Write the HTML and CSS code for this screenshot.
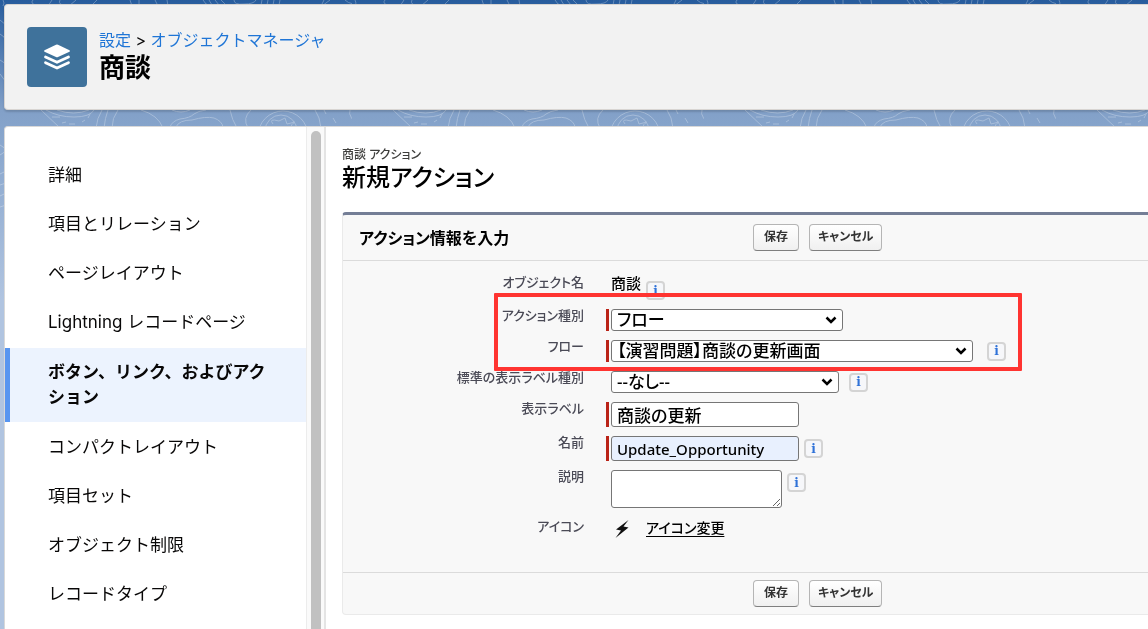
FILE: index.html
```
<!DOCTYPE html>
<html lang="ja">
<head>
<meta charset="utf-8">
<title>商談 | オブジェクトマネージャ</title>
<link rel="stylesheet" href="styles.css">
</head>
<body>
<svg class="backdrop" aria-hidden="true">
  <defs>
    <pattern id="topo" width="352" height="629" patternUnits="userSpaceOnUse">
      <g fill="none" stroke="#fff" stroke-width="1">
        <path d="M3 0q2 3 0 6M33 0q-4 4 6 6M52 0l-4 6M60 0q-3 5 8 6M76 0l-7 6M97 0l-6 6M130 0l2 6M139 0v6M155 0l3 6M167 0l1 6M203 0l3 4 6 2M209 0l3 5M215 0l4 5M221 0l4 4M234 0q0 5 10 4 10 0 12-4M262 0l-1 5M268 0l-1 5M274 0l-1 5M280 0l-1 5M324 0l-3 6M330 0l-8 6M345 0q6 6 18 3"/>
        <path d="M41 110l19 18M52 117h8M62 123l4-1M69 124h6M82 122l3-2M88 118l2-4M46 110q12 7 28 7t20-7M57 110q17 6 32 0M102 110q-5 8-6 18M108 110q-3 8-4 18M118 110q-6 8-6 18M141 110q17 5 22 18M172 110q9 4 18 0M170 127q2-6 10-8 10-1 14-5 4-3 12-4M176 127q3-7 16-7 14-4 22-2 8 3 9 9M230 110q2 10 7 18M251 110q-9 8-3 18M315 110q5 7 6 18M324 110l2 4M333 118l3 5M350 110q-3 7 12 18"/>
        <circle cx="283" cy="136" r="25"/><circle cx="281" cy="131" r="16"/>
        <path d="M273 124q-5-6 6-3l6-3 2 6 8-2q-5 3-3 5M0 20l6 5M0 34q5 2 6 8M0 60l6 4M0 74l6 8M0 145l6 4M0 155l6-4M0 174l6-3M0 185l6-2M0 196l6-3M0 207l6-2"/>
      </g>
    </pattern>
  </defs>
  <rect width="100%" height="100%" fill="url(#topo)"/>
</svg>
<div class="page">
  <header class="page-header">
    <span class="object-icon">
      <svg viewBox="0 0 28 28" aria-hidden="true">
        <path d="M14 1.500Q14.500 1.500 15 1.700L26.500 7.300Q27.500 8 26.500 8.700L15 14.100Q14 14.500 13 14.100L1.500 8.700Q.500 8 1.500 7.300L13 1.700Q13.500 1.500 14 1.500Z" fill="#fff"/>
        <path d="M2.500 14L14 19.300 25.500 14M2.500 19.700L14 25 25.500 19.700" fill="none" stroke="#fff" stroke-width="2.800" stroke-linecap="round" stroke-linejoin="round"/>
      </svg>
    </span>
    <div>
      <nav class="breadcrumb"><a href="#">設定</a> &gt; <a href="#">オブジェクトマネージャ</a></nav>
      <h1 class="object-name">商談</h1>
    </div>
  </header>
  <div class="workspace">
    <nav class="side-nav">
      <a class="side-link" href="#">詳細</a>
      <a class="side-link" href="#">項目とリレーション</a>
      <a class="side-link" href="#">ページレイアウト</a>
      <a class="side-link" href="#">Lightning レコードページ</a>
      <a class="side-link active" href="#" aria-current="page">ボタン、リンク、およびアクション</a>
      <a class="side-link" href="#">コンパクトレイアウト</a>
      <a class="side-link" href="#">項目セット</a>
      <a class="side-link" href="#">オブジェクト制限</a>
      <a class="side-link" href="#">レコードタイプ</a>
    </nav>
    <div class="scroll-track"><div class="scroll-thumb"></div></div>
    <main class="content">
      <p class="kicker">商談 アクション</p>
      <h2 class="title">新規アクション</h2>
      <form class="panel">
        <div class="panel-bar panel-head">
          <h3 class="panel-title">アクション情報を入力</h3>
          <div class="actions">
            <button class="btn" type="button">保存</button>
            <button class="btn" type="button">キャンセル</button>
          </div>
        </div>
        <div class="fields">
          <span class="label">オブジェクト名</span>
          <div class="field first"><span class="value">商談</span><button class="info low" type="button" aria-label="オブジェクト名の情報">i</button></div>

          <label class="label" for="type">アクション種別</label>
          <div class="field required">
            <span class="select-box w-type"><select id="type"><option>フロー</option></select><svg viewBox="0 0 12 8" aria-hidden="true"><path d="M1.500 1.500L6 6L10.500 1.500"/></svg></span>
          </div>

          <label class="label" for="flow">フロー</label>
          <div class="field required">
            <span class="select-box w-flow"><select id="flow"><option>【演習問題】商談の更新画面</option></select><svg viewBox="0 0 12 8" aria-hidden="true"><path d="M1.500 1.500L6 6L10.500 1.500"/></svg></span>
            <button class="info far" type="button" aria-label="フローの情報">i</button>
          </div>

          <label class="label" for="std">標準の表示ラベル種別</label>
          <div class="field">
            <span class="select-box w-std"><select id="std"><option>--なし--</option></select><svg viewBox="0 0 12 8" aria-hidden="true"><path d="M1.500 1.500L6 6L10.500 1.500"/></svg></span>
            <button class="info mid" type="button" aria-label="標準の表示ラベル種別の情報">i</button>
          </div>

          <label class="label" for="lbl">表示ラベル</label>
          <div class="field required"><input class="text" id="lbl" type="text" value="商談の更新"></div>

          <label class="label" for="name">名前</label>
          <div class="field required"><input class="text filled" id="name" type="text" value="Update_Opportunity"><button class="info" type="button" aria-label="名前の情報">i</button></div>

          <label class="label" for="desc">説明</label>
          <div class="field top"><textarea class="area" id="desc"></textarea><button class="info" type="button" aria-label="説明の情報">i</button></div>

          <span class="label icon-label">アイコン</span>
          <div class="field">
            <svg class="bolt" viewBox="0 0 16 20" aria-hidden="true"><path d="M14.500 1L2 10.500 7 11.500 1.500 19 14.500 8.500 9.500 7.500Z"/></svg>
            <a class="change" href="#">アイコン変更</a>
          </div>
          <div class="highlight"></div>
        </div>
        <div class="panel-bar panel-foot">
          <div class="actions">
            <button class="btn" type="button">保存</button>
            <button class="btn" type="button">キャンセル</button>
          </div>
        </div>
      </form>
    </main>
  </div>
</div>
</body>
</html>
```
FILE: styles.css
```
* { box-sizing: border-box; }
body {
  margin: 0;
  overflow: hidden;
  color: #080707;
  font-family: Inter, "Noto Sans CJK JP", sans-serif;
  background: linear-gradient(#275c9d 0, #82a0c8 110px, #86a4cb 128px, #b0c4e0 300px, #b0c4e0 100%);
}
.backdrop { position: fixed; inset: 0; width: 100%; height: 100%; z-index: -1; opacity: .28; }
.page { display: flex; flex-direction: column; gap: 16px; height: 100vh; padding: 4px 0 0 4px; }

.page-header {
  display: flex;
  align-items: flex-start;
  gap: 12px;
  flex: none;
  padding: 22px;
  border: 1px solid #d8d5d2;
  border-right: 0;
  border-radius: 4px 0 0 4px;
  background: #f2f2f2;
  box-shadow: 0 2px 2px rgba(0, 0, 0, .15);
}
.object-icon { display: flex; align-items: center; justify-content: center; width: 60px; height: 60px; border-radius: 4px; background: #3f729b; }
.object-icon svg { width: 28px; height: 28px; }
.breadcrumb { font-size: 16px; line-height: 26px; }
.breadcrumb a { color: #1f75d6; text-decoration: none; }
.object-name { margin: 0; font-size: 26px; line-height: 30px; font-weight: 700; color: #000; }

.workspace {
  display: grid;
  grid-template-columns: 301px 20px 1fr;
  flex: 1;
  min-height: 0;
  overflow: hidden;
  border: 1px solid #d8d8d8;
  border-width: 1px 0 0 1px;
  border-radius: 4px 0 0 0;
  background: #fff;
}
.side-nav { padding-top: 24px; overflow: hidden; }
.side-link { display: block; padding: 12px 28px 12px 43px; font-size: 17px; line-height: 25px; color: #080707; text-decoration: none; }
.side-link.active { margin: 1px 0; padding-left: 38px; border-left: 5px solid #5795f0; background: #ecf3fe; font-weight: 700; }
.scroll-track { padding: 4px 4px 0; border-left: 1px solid #ececec; border-right: 2px solid #e4e4e4; background: #fafafa; }
.scroll-thumb { width: 10px; height: 100%; border-radius: 5px 5px 0 0; background: #c1c1c1; }

.content { padding: 20px 0 0 16px; font-feature-settings: "palt"; font-family: "Noto Sans", "Noto Sans CJK JP", sans-serif; }
.kicker { margin: 0; font-size: 12px; line-height: 16px; font-weight: 500; color: #3e3e3c; }
.title { margin: 0 0 21px; font-size: 24px; line-height: 28px; font-weight: 500; color: #000; }

.panel { border: 1px solid #eaeaea; border-top: 3px solid #747e96; border-right: 0; border-radius: 4px 0 0 4px; background: #f8f8f8; }
.panel-bar { display: grid; grid-template-columns: 394px 1fr; align-items: center; padding-left: 16px; }
.panel-head { height: 46px; border-bottom: 1px solid #dbdbdb; }
.panel-foot { height: 42px; border-top: 1px solid #dbdbdb; }
.panel-title { margin: 0; font-size: 16px; line-height: 24px; color: #000; }
.actions { grid-column: 2; display: flex; gap: 10px; }
.btn {
  min-width: 46px;
  height: 27px;
  padding: 0 8px 2px;
  border: 1px solid #b5b5b5;
  border-bottom-color: #7f7f7f;
  border-radius: 4px;
  background: linear-gradient(#fff, #f0f0f0);
  color: #333;
  font: 700 12px/20px "Noto Sans", "Noto Sans CJK JP", sans-serif;
  font-feature-settings: inherit;
}

.fields { position: relative; display: grid; grid-template-columns: 241px 1fr; column-gap: 22px; row-gap: 9px; padding: 15px 0 33px; }
.label { justify-self: end; font-size: 13px; line-height: 13px; font-weight: 500; color: #4a4a56; white-space: nowrap; }
.icon-label { padding-top: 3px; }
.field { display: flex; align-items: center; padding-left: 5px; font-size: 17px; }
.required { padding-left: 2px; border-left: 3px solid #ba2318; }
.first { height: 24px; align-items: flex-start; gap: 5px; }
.top { align-items: flex-start; }
.value { font-size: 15px; line-height: 15px; font-weight: 500; color: #000; }
.info {
  flex: none;
  width: 19px;
  height: 19px;
  margin-left: 5px;
  padding: 0;
  border: 2px solid #d4d4d4;
  border-radius: 4px;
  background: #f6f7fa;
  color: #2f72d8;
  font: 700 12px/14px "DejaVu Serif", serif;
}
.info.low { margin: 5px 0 0; }
.info.mid { margin-left: 10px; }
.info.far { margin-left: 14px; }
.top .info { margin-top: 3px; }
.select-box { position: relative; display: block; }
.select-box select {
  display: block;
  width: 100%;
  height: 22px;
  padding: 0 24px 0 5px;
  border: 1px solid #767676;
  border-radius: 3px;
  appearance: none;
  background: #fff;
  color: #000;
  font: 500 17px/20px "Noto Sans", "Noto Sans CJK JP", sans-serif;
  font-feature-settings: inherit;
}
.select-box svg { position: absolute; right: 6px; top: 7px; width: 12px; height: 8px; pointer-events: none; fill: none; stroke: #000; stroke-width: 2.500; }
.w-type { width: 232px; }
.w-flow { width: 362px; }
.w-std { width: 228px; }
.text, .area {
  border: 1px solid #767676;
  border-radius: 3px;
  background: #fff;
  color: #000;
  font: 500 17px/20px "Noto Sans", "Noto Sans CJK JP", sans-serif;
  font-feature-settings: inherit;
}
.text { width: 188px; height: 25px; padding: 0 5px; }
.text.filled { background: #e8f0fe; font-size: 15px; }
.area { display: block; width: 171px; height: 38px; resize: both; }
.bolt { width: 16px; height: 20px; margin: 2px 16px 0 3px; fill: #111; }
.change { font-size: 14px; line-height: 22px; font-weight: 500; color: #000; text-underline-offset: 3px; }
.highlight { position: absolute; left: 151px; top: 32px; width: 528px; height: 78px; border: 4px solid #ff3431; border-radius: 1px; pointer-events: none; }
```
